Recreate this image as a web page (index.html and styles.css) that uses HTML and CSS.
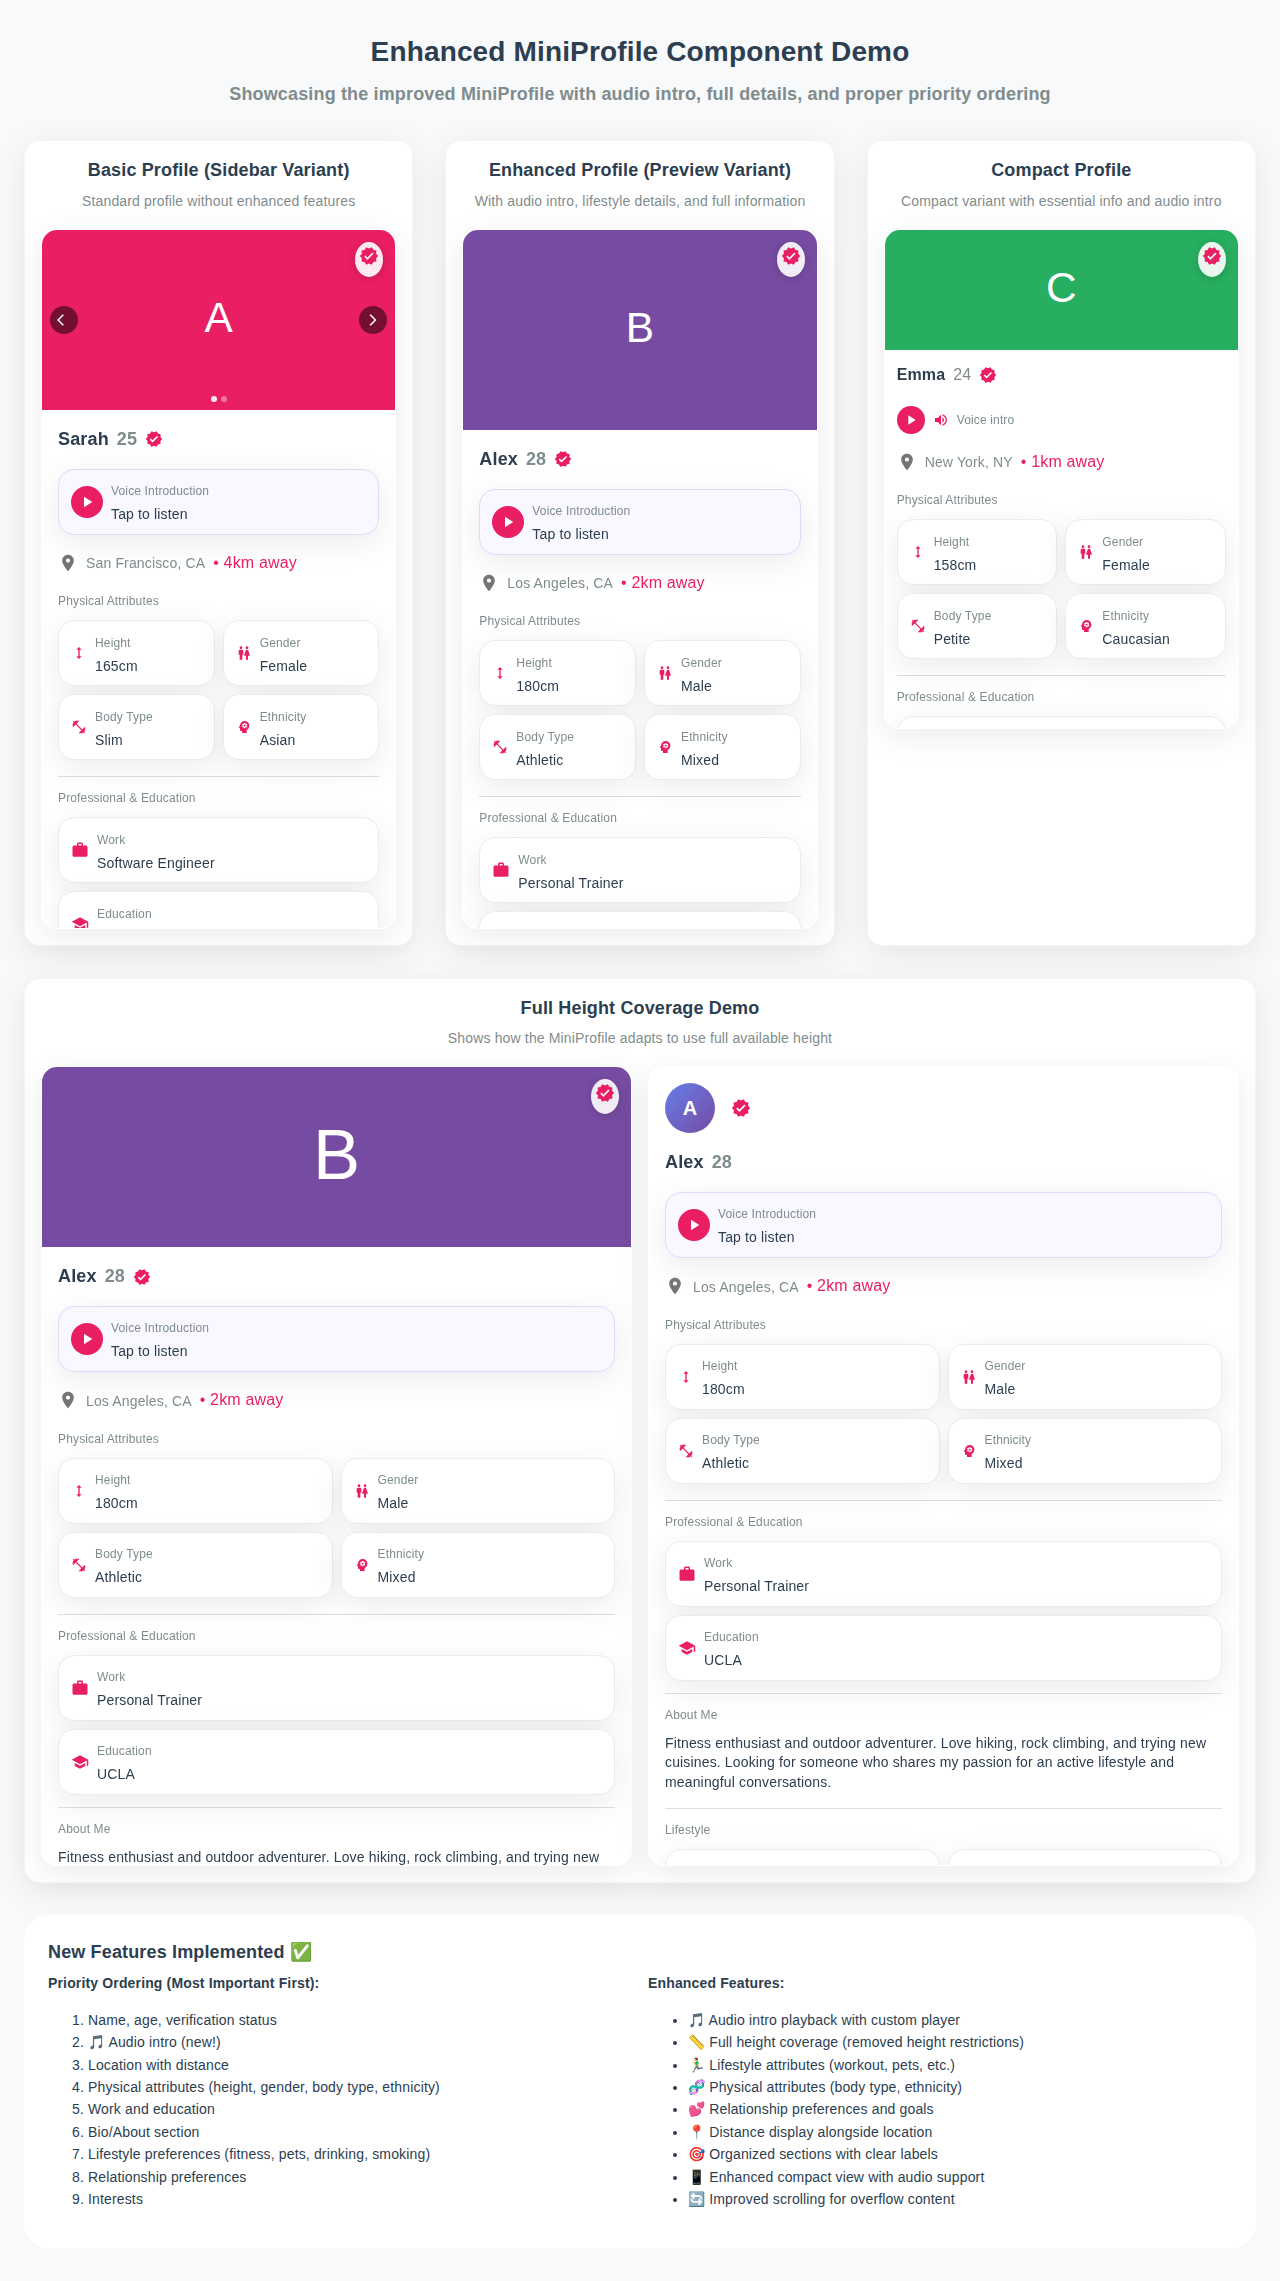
FILE: index.html
```html
<!DOCTYPE html>
<html lang="en">
<head>
<meta charset="utf-8">
<title>Enhanced MiniProfile Component Demo</title>
<link rel="stylesheet" href="styles.css">
</head>
<body>
<svg class="sprite" aria-hidden="true">
  <symbol id="i-verified" viewBox="0 0 24 24"><path d="m23 12-2.44-2.79.34-3.69-3.61-.82-1.89-3.2L12 2.96 8.6 1.5 6.71 4.69 3.1 5.5l.34 3.7L1 12l2.44 2.79-.34 3.7 3.61.82L8.6 22.5l3.4-1.47 3.4 1.46 1.89-3.19 3.61-.82-.34-3.69zm-12.91 4.72-3.8-3.81 1.48-1.48 2.32 2.33 5.85-5.87 1.48 1.48z"/></symbol>
  <symbol id="i-play" viewBox="0 0 24 24"><path d="M8 5v14l11-7z"/></symbol>
  <symbol id="i-volume" viewBox="0 0 24 24"><path d="M3 9v6h4l5 5V4L7 9zm13.5 3c0-1.77-1.02-3.29-2.5-4.03v8.05c1.48-.73 2.5-2.25 2.5-4.02M14 3.23v2.06c2.89.86 5 3.54 5 6.71s-2.11 5.85-5 6.71v2.06c4.01-.91 7-4.49 7-8.77s-2.99-7.86-7-8.77"/></symbol>
  <symbol id="i-pin" viewBox="0 0 24 24"><path d="M12 2C8.13 2 5 5.13 5 9c0 5.25 7 13 7 13s7-7.75 7-13c0-3.87-3.13-7-7-7m0 9.5c-1.38 0-2.5-1.12-2.5-2.5s1.12-2.5 2.5-2.5 2.5 1.12 2.5 2.5-1.12 2.5-2.5 2.5"/></symbol>
  <symbol id="i-height" viewBox="0 0 24 24"><path d="M13 6.99h3L12 3 8 6.99h3v10.02H8L12 21l4-3.99h-3z"/></symbol>
  <symbol id="i-gender" viewBox="0 0 24 24"><path d="M5.5 22v-7.5H4V9c0-1.1.9-2 2-2h3c1.1 0 2 .9 2 2v5.5H9.5V22zM18 22v-6h3l-2.54-7.63C18.18 7.55 17.42 7 16.56 7h-.12c-.86 0-1.63.55-1.9 1.37L12 16h3v6zM7.5 6c1.11 0 2-.89 2-2s-.89-2-2-2-2 .89-2 2 .89 2 2 2m9 0c1.11 0 2-.89 2-2s-.89-2-2-2-2 .89-2 2 .89 2 2 2"/></symbol>
  <symbol id="i-fitness" viewBox="0 0 24 24"><path d="M20.57 14.86 22 13.43 20.57 12 17 15.57 8.43 7 12 3.43 10.57 2 9.14 3.43 7.71 2 5.57 4.14 4.14 2.71 2.71 4.14l1.43 1.43L2 7.71l1.43 1.43L2 10.57 3.43 12 7 8.43 15.57 17 12 20.57 13.43 22l1.43-1.43L16.29 22l2.14-2.14 1.43 1.43 1.43-1.43-1.43-1.43L22 16.29z"/></symbol>
  <symbol id="i-mind" viewBox="0 0 24 24"><path d="M13 8.57c-.79 0-1.43.64-1.43 1.43s.64 1.43 1.43 1.43 1.43-.64 1.43-1.43-.64-1.43-1.43-1.43"/><path d="M13 3C9.25 3 6.2 5.94 6.02 9.64L4.1 12.2c-.25.33-.01.8.4.8H6v3c0 1.1.9 2 2 2h1v3h7v-4.68c2.36-1.12 4-3.53 4-6.32 0-3.87-3.13-7-7-7m3 7c0 .13-.01.26-.02.39l.83.66c.08.06.1.16.05.25l-.8 1.39c-.05.09-.16.12-.24.09l-.99-.4c-.21.16-.43.29-.67.39L14 13.83c-.01.1-.1.17-.2.17h-1.6c-.1 0-.18-.07-.2-.17l-.15-1.06c-.25-.1-.47-.23-.68-.39l-.99.4c-.09.03-.2 0-.25-.09l-.8-1.39c-.05-.08-.03-.19.05-.25l.84-.66c-.01-.13-.02-.26-.02-.39s.02-.27.04-.39l-.85-.66c-.08-.06-.1-.16-.05-.26l.8-1.38c.05-.09.15-.12.24-.09l1 .4c.2-.15.43-.29.67-.39L12 6.17c.02-.1.1-.17.2-.17h1.6c.1 0 .18.07.2.17l.15 1.06c.24.1.46.23.67.39l1-.4c.09-.03.2 0 .24.09l.8 1.38c.05.09.03.2-.05.26l-.85.66c.03.12.04.25.04.39"/></symbol>
  <symbol id="i-work" viewBox="0 0 24 24"><path d="M20 6h-4V4c0-1.11-.89-2-2-2h-4c-1.11 0-2 .89-2 2v2H4c-1.11 0-1.99.89-1.99 2L2 19c0 1.11.89 2 2 2h16c1.11 0 2-.89 2-2V8c0-1.11-.89-2-2-2m-6 0h-4V4h4z"/></symbol>
  <symbol id="i-school" viewBox="0 0 24 24"><path d="M5 13.18v4L12 21l7-3.82v-4L12 17zM12 3 1 9l11 6 9-4.91V17h2V9z"/></symbol>
  <symbol id="i-back" viewBox="0 0 24 24"><path d="M11.67 3.87 9.9 2.1 0 12l9.9 9.9 1.77-1.77L3.54 12z"/></symbol>
  <symbol id="i-forward" viewBox="0 0 24 24"><path d="M6.23 20.23 8 22l10-10L8 2 6.23 3.77 14.46 12z"/></symbol>
</svg>

<main class="page">
  <header class="page-header">
    <h1 class="page-title">Enhanced MiniProfile Component Demo</h1>
    <h2 class="page-subtitle">Showcasing the improved MiniProfile with audio intro, full details, and proper priority ordering</h2>
  </header>

  <div class="demo-row">
    <section class="card">
      <h3 class="card-title">Basic Profile (Sidebar Variant)</h3>
      <p class="card-subtitle">Standard profile without enhanced features</p>
      <article class="mini mini-tall">
        <div class="photo photo-pink photo-180">
          <span class="photo-letter">A</span>
          <span class="photo-badge"><svg class="icon icon-20"><use href="#i-verified"/></svg></span>
          <span class="photo-nav photo-nav-prev"><svg class="icon icon-14"><use href="#i-back"/></svg></span>
          <span class="photo-nav photo-nav-next"><svg class="icon icon-14"><use href="#i-forward"/></svg></span>
          <span class="photo-dots"><span class="dot dot-active"></span><span class="dot"></span></span>
        </div>
        <div class="mini-body">
          <div class="name-row"><span class="name">Sarah</span><span class="age">25</span><svg class="icon icon-18"><use href="#i-verified"/></svg></div>
          <div class="voice">
            <span class="play"><svg class="icon icon-18"><use href="#i-play"/></svg></span>
            <div class="voice-text"><span class="label">Voice Introduction</span><span class="value">Tap to listen</span></div>
          </div>
          <div class="location"><svg class="icon icon-20 icon-muted"><use href="#i-pin"/></svg><span class="city">San Francisco, CA</span><span class="distance">• 4km away</span></div>
          <h4 class="section-label">Physical Attributes</h4>
          <div class="tiles tiles-two">
            <div class="tile"><svg class="icon icon-16"><use href="#i-height"/></svg><div class="tile-text"><span class="label">Height</span><span class="value">165cm</span></div></div>
            <div class="tile"><svg class="icon icon-16"><use href="#i-gender"/></svg><div class="tile-text"><span class="label">Gender</span><span class="value">Female</span></div></div>
            <div class="tile"><svg class="icon icon-16"><use href="#i-fitness"/></svg><div class="tile-text"><span class="label">Body Type</span><span class="value">Slim</span></div></div>
            <div class="tile"><svg class="icon icon-16"><use href="#i-mind"/></svg><div class="tile-text"><span class="label">Ethnicity</span><span class="value">Asian</span></div></div>
          </div>
          <hr class="divider divider-wide">
          <h4 class="section-label">Professional &amp; Education</h4>
          <div class="tiles">
            <div class="tile"><svg class="icon icon-18"><use href="#i-work"/></svg><div class="tile-text"><span class="label">Work</span><span class="value">Software Engineer</span></div></div>
            <div class="tile"><svg class="icon icon-18"><use href="#i-school"/></svg><div class="tile-text"><span class="label">Education</span><span class="value">&nbsp;</span></div></div>
          </div>
        </div>
      </article>
    </section>

    <section class="card">
      <h3 class="card-title">Enhanced Profile (Preview Variant)</h3>
      <p class="card-subtitle">With audio intro, lifestyle details, and full information</p>
      <article class="mini mini-tall">
        <div class="photo photo-purple photo-200">
          <span class="photo-letter">B</span>
          <span class="photo-badge"><svg class="icon icon-20"><use href="#i-verified"/></svg></span>
        </div>
        <div class="mini-body">
          <div class="name-row"><span class="name">Alex</span><span class="age">28</span><svg class="icon icon-18"><use href="#i-verified"/></svg></div>
          <div class="voice">
            <span class="play"><svg class="icon icon-18"><use href="#i-play"/></svg></span>
            <div class="voice-text"><span class="label">Voice Introduction</span><span class="value">Tap to listen</span></div>
          </div>
          <div class="location"><svg class="icon icon-20 icon-muted"><use href="#i-pin"/></svg><span class="city">Los Angeles, CA</span><span class="distance">• 2km away</span></div>
          <h4 class="section-label">Physical Attributes</h4>
          <div class="tiles tiles-two">
            <div class="tile"><svg class="icon icon-16"><use href="#i-height"/></svg><div class="tile-text"><span class="label">Height</span><span class="value">180cm</span></div></div>
            <div class="tile"><svg class="icon icon-16"><use href="#i-gender"/></svg><div class="tile-text"><span class="label">Gender</span><span class="value">Male</span></div></div>
            <div class="tile"><svg class="icon icon-16"><use href="#i-fitness"/></svg><div class="tile-text"><span class="label">Body Type</span><span class="value">Athletic</span></div></div>
            <div class="tile"><svg class="icon icon-16"><use href="#i-mind"/></svg><div class="tile-text"><span class="label">Ethnicity</span><span class="value">Mixed</span></div></div>
          </div>
          <hr class="divider divider-wide">
          <h4 class="section-label">Professional &amp; Education</h4>
          <div class="tiles">
            <div class="tile"><svg class="icon icon-18"><use href="#i-work"/></svg><div class="tile-text"><span class="label">Work</span><span class="value">Personal Trainer</span></div></div>
            <div class="tile"></div>
          </div>
        </div>
      </article>
    </section>

    <section class="card">
      <h3 class="card-title">Compact Profile</h3>
      <p class="card-subtitle">Compact variant with essential info and audio intro</p>
      <article class="mini mini-compact">
        <div class="photo photo-green photo-120">
          <span class="photo-letter">C</span>
          <span class="photo-badge"><svg class="icon icon-20"><use href="#i-verified"/></svg></span>
        </div>
        <div class="mini-body">
          <div class="name-row"><span class="name">Emma</span><span class="age">24</span><svg class="icon icon-18"><use href="#i-verified"/></svg></div>
          <div class="voice-compact">
            <span class="play play-small"><svg class="icon icon-16"><use href="#i-play"/></svg></span>
            <svg class="icon icon-16"><use href="#i-volume"/></svg>
            <span class="voice-note">Voice intro</span>
          </div>
          <div class="location"><svg class="icon icon-20 icon-muted"><use href="#i-pin"/></svg><span class="city">New York, NY</span><span class="distance">• 1km away</span></div>
          <h4 class="section-label">Physical Attributes</h4>
          <div class="tiles tiles-two">
            <div class="tile"><svg class="icon icon-16"><use href="#i-height"/></svg><div class="tile-text"><span class="label">Height</span><span class="value">158cm</span></div></div>
            <div class="tile"><svg class="icon icon-16"><use href="#i-gender"/></svg><div class="tile-text"><span class="label">Gender</span><span class="value">Female</span></div></div>
            <div class="tile"><svg class="icon icon-16"><use href="#i-fitness"/></svg><div class="tile-text"><span class="label">Body Type</span><span class="value">Petite</span></div></div>
            <div class="tile"><svg class="icon icon-16"><use href="#i-mind"/></svg><div class="tile-text"><span class="label">Ethnicity</span><span class="value">Caucasian</span></div></div>
          </div>
          <hr class="divider divider-wide">
          <h4 class="section-label">Professional &amp; Education</h4>
          <div class="tiles">
            <div class="tile"></div>
          </div>
        </div>
      </article>
    </section>
  </div>

  <section class="card card-full">
    <h3 class="card-title">Full Height Coverage Demo</h3>
    <p class="card-subtitle">Shows how the MiniProfile adapts to use full available height</p>
    <div class="mini-row">
      <article class="mini mini-full">
        <div class="photo photo-purple photo-180 photo-large">
          <span class="photo-letter">B</span>
          <span class="photo-badge"><svg class="icon icon-20"><use href="#i-verified"/></svg></span>
        </div>
        <div class="mini-body">
          <div class="name-row"><span class="name">Alex</span><span class="age">28</span><svg class="icon icon-18"><use href="#i-verified"/></svg></div>
          <div class="voice">
            <span class="play"><svg class="icon icon-18"><use href="#i-play"/></svg></span>
            <div class="voice-text"><span class="label">Voice Introduction</span><span class="value">Tap to listen</span></div>
          </div>
          <div class="location"><svg class="icon icon-20 icon-muted"><use href="#i-pin"/></svg><span class="city">Los Angeles, CA</span><span class="distance">• 2km away</span></div>
          <h4 class="section-label">Physical Attributes</h4>
          <div class="tiles tiles-two">
            <div class="tile"><svg class="icon icon-16"><use href="#i-height"/></svg><div class="tile-text"><span class="label">Height</span><span class="value">180cm</span></div></div>
            <div class="tile"><svg class="icon icon-16"><use href="#i-gender"/></svg><div class="tile-text"><span class="label">Gender</span><span class="value">Male</span></div></div>
            <div class="tile"><svg class="icon icon-16"><use href="#i-fitness"/></svg><div class="tile-text"><span class="label">Body Type</span><span class="value">Athletic</span></div></div>
            <div class="tile"><svg class="icon icon-16"><use href="#i-mind"/></svg><div class="tile-text"><span class="label">Ethnicity</span><span class="value">Mixed</span></div></div>
          </div>
          <hr class="divider divider-wide">
          <h4 class="section-label">Professional &amp; Education</h4>
          <div class="tiles">
            <div class="tile"><svg class="icon icon-18"><use href="#i-work"/></svg><div class="tile-text"><span class="label">Work</span><span class="value">Personal Trainer</span></div></div>
            <div class="tile"><svg class="icon icon-18"><use href="#i-school"/></svg><div class="tile-text"><span class="label">Education</span><span class="value">UCLA</span></div></div>
          </div>
          <hr class="divider">
          <h4 class="section-label">About Me</h4>
          <p class="bio">Fitness enthusiast and outdoor adventurer. Love hiking, rock climbing, and trying new</p>
        </div>
      </article>

      <article class="mini mini-full">
        <div class="mini-body">
          <div class="avatar-row"><span class="avatar">A</span><svg class="icon icon-20"><use href="#i-verified"/></svg></div>
          <div class="name-row"><span class="name">Alex</span><span class="age">28</span></div>
          <div class="voice">
            <span class="play"><svg class="icon icon-18"><use href="#i-play"/></svg></span>
            <div class="voice-text"><span class="label">Voice Introduction</span><span class="value">Tap to listen</span></div>
          </div>
          <div class="location"><svg class="icon icon-20 icon-muted"><use href="#i-pin"/></svg><span class="city">Los Angeles, CA</span><span class="distance">• 2km away</span></div>
          <h4 class="section-label">Physical Attributes</h4>
          <div class="tiles tiles-two">
            <div class="tile"><svg class="icon icon-16"><use href="#i-height"/></svg><div class="tile-text"><span class="label">Height</span><span class="value">180cm</span></div></div>
            <div class="tile"><svg class="icon icon-16"><use href="#i-gender"/></svg><div class="tile-text"><span class="label">Gender</span><span class="value">Male</span></div></div>
            <div class="tile"><svg class="icon icon-16"><use href="#i-fitness"/></svg><div class="tile-text"><span class="label">Body Type</span><span class="value">Athletic</span></div></div>
            <div class="tile"><svg class="icon icon-16"><use href="#i-mind"/></svg><div class="tile-text"><span class="label">Ethnicity</span><span class="value">Mixed</span></div></div>
          </div>
          <hr class="divider divider-wide">
          <h4 class="section-label">Professional &amp; Education</h4>
          <div class="tiles">
            <div class="tile"><svg class="icon icon-18"><use href="#i-work"/></svg><div class="tile-text"><span class="label">Work</span><span class="value">Personal Trainer</span></div></div>
            <div class="tile"><svg class="icon icon-18"><use href="#i-school"/></svg><div class="tile-text"><span class="label">Education</span><span class="value">UCLA</span></div></div>
          </div>
          <hr class="divider">
          <h4 class="section-label">About Me</h4>
          <p class="bio">Fitness enthusiast and outdoor adventurer. Love hiking, rock climbing, and trying new cuisines. Looking for someone who shares my passion for an active lifestyle and meaningful conversations.</p>
          <hr class="divider divider-bio">
          <h4 class="section-label">Lifestyle</h4>
          <div class="tiles tiles-two">
            <div class="tile"></div>
            <div class="tile"></div>
          </div>
        </div>
      </article>
    </div>
  </section>

  <section class="features">
    <h3 class="features-title">New Features Implemented ✅</h3>
    <div class="features-columns">
      <div>
        <h4 class="features-heading">Priority Ordering (Most Important First):</h4>
        <ol class="features-list">
          <li>Name, age, verification status</li>
          <li>🎵 Audio intro (new!)</li>
          <li>Location with distance</li>
          <li>Physical attributes (height, gender, body type, ethnicity)</li>
          <li>Work and education</li>
          <li>Bio/About section</li>
          <li>Lifestyle preferences (fitness, pets, drinking, smoking)</li>
          <li>Relationship preferences</li>
          <li>Interests</li>
        </ol>
      </div>
      <div>
        <h4 class="features-heading">Enhanced Features:</h4>
        <ul class="features-list">
          <li>🎵 Audio intro playback with custom player</li>
          <li>📏 Full height coverage (removed height restrictions)</li>
          <li>🏃‍♂️ Lifestyle attributes (workout, pets, etc.)</li>
          <li>🧬 Physical attributes (body type, ethnicity)</li>
          <li>💕 Relationship preferences and goals</li>
          <li>📍 Distance display alongside location</li>
          <li>🎯 Organized sections with clear labels</li>
          <li>📱 Enhanced compact view with audio support</li>
          <li>🔄 Improved scrolling for overflow content</li>
        </ul>
      </div>
    </div>
  </section>
</main>
</body>
</html>
```
FILE: styles.css
```css
:root {
  --ink: #2c3e50;
  --muted: #7f8c8d;
  --accent: #e91e63;
  --soft-shadow: 0 8px 32px rgba(0, 0, 0, 0.08);
}

* { box-sizing: border-box; }

body {
  margin: 0;
  background: #f8f9fb;
  color: var(--ink);
  font-family: "Liberation Sans", Arial, sans-serif;
  font-size: 14px;
  letter-spacing: 0.15px;
}

h1, h2, h3, h4, p { margin: 0; }

.sprite { display: none; }

.page { padding: 32px 24px; }

/* Header */
.page-header { text-align: center; margin-bottom: 33.2px; }
.page-title {
  font-size: 28px;
  line-height: 39.2px;
  margin-bottom: 10.8px;
}
.page-subtitle {
  font-size: 18px;
  line-height: 25.2px;
  color: var(--muted);
}

/* Demo cards */
.demo-row {
  display: grid;
  grid-template-columns: repeat(3, minmax(0, 1fr));
  gap: 32px;
  margin-bottom: 32px;
}
.card {
  padding: 16px;
  background: #fff;
  border: 1px solid rgba(0, 0, 0, 0.04);
  border-radius: 16px;
  box-shadow: var(--soft-shadow);
}
.card-full { margin-bottom: 32px; }
.card-title {
  font-size: 18px;
  line-height: 26.6px;
  margin-bottom: 7px;
  text-align: center;
}
.card-subtitle {
  line-height: 21.8px;
  margin-bottom: 16px;
  color: var(--muted);
  text-align: center;
}
.mini-row {
  display: grid;
  grid-template-columns: repeat(2, minmax(0, 1fr));
  gap: 16px;
}

/* Mini profile */
.mini {
  overflow: hidden;
  background: rgba(255, 255, 255, 0.95);
  border: 1px solid #fff;
  border-radius: 16px;
  box-shadow: var(--soft-shadow);
  backdrop-filter: blur(10px);
}
.mini-tall { height: 700px; }
.mini-compact { height: 500px; }
.mini-full { height: 800px; }
.mini-body { padding: 16px; }
.mini-compact .mini-body { padding: 12px; }

.icon { flex: none; display: block; fill: currentColor; color: var(--accent); }
.icon-14 { width: 14px; height: 14px; }
.icon-16 { width: 16px; height: 16px; }
.icon-18 { width: 18px; height: 18px; }
.icon-20 { width: 20px; height: 20px; }
.icon-muted { color: #757575; }

/* Photo header */
.photo {
  position: relative;
  display: flex;
  align-items: center;
  justify-content: center;
  padding-bottom: 3px;
  color: #fff;
}
.photo-120 { height: 120px; }
.photo-180 { height: 180px; }
.photo-200 { height: 200px; }
.photo-pink { background: #e91e63; }
.photo-purple { background: #764ba2; }
.photo-green { background: #27ae60; }
.photo-letter { font-size: 42.4px; line-height: 1; letter-spacing: 0; }
.photo-large .photo-letter { font-size: 70.7px; }
.photo-badge {
  position: absolute;
  top: 12px;
  right: 12px;
  width: 28px;
  height: 35px;
  padding: 4px;
  border-radius: 50%;
  background: rgba(255, 255, 255, 0.9);
  box-shadow: 0 2px 8px rgba(0, 0, 0, 0.15);
}
.photo-nav {
  position: absolute;
  top: calc(50% - 14px);
  display: flex;
  align-items: center;
  justify-content: center;
  width: 28px;
  height: 28px;
  border-radius: 50%;
  background: rgba(0, 0, 0, 0.5);
}
.photo-nav-prev { left: 8px; }
.photo-nav-next { right: 8px; }
.photo-nav .icon { color: #fff; }
.photo-dots {
  position: absolute;
  bottom: 8px;
  left: calc(50% - 8px);
  display: flex;
  gap: 4px;
}
.dot { width: 6px; height: 6px; border-radius: 50%; background: rgba(255, 255, 255, 0.4); }
.dot-active { background: rgba(255, 255, 255, 0.9); }

/* Identity */
.avatar-row { display: flex; align-items: center; gap: 16px; margin-bottom: 16px; }
.avatar {
  display: flex;
  align-items: center;
  justify-content: center;
  width: 50px;
  height: 50px;
  border-radius: 50%;
  background: linear-gradient(135deg, #667eea 0%, #764ba2 100%);
  color: #fff;
  font-size: 20px;
  font-weight: 700;
}
.name-row {
  display: flex;
  align-items: center;
  gap: 8px;
  height: 27px;
  margin-bottom: 16px;
  font-size: 18px;
  font-weight: 700;
}
.age { color: var(--muted); }
.mini-compact .name-row { font-size: 16px; margin-bottom: 17px; }
.mini-compact .age { font-weight: 400; }

/* Voice introduction */
.voice {
  display: flex;
  align-items: center;
  gap: 8px;
  height: 66px;
  padding: 0 12px;
  margin-bottom: 16px;
  background: #f9f7ff;
  border: 1px solid #e0d9fb;
  border-radius: 16px;
  box-shadow: var(--soft-shadow);
}
.voice-compact { display: flex; align-items: center; gap: 8px; margin-bottom: 16px; }
.voice-note { font-size: 12px; color: var(--muted); }
.play {
  flex: none;
  display: flex;
  align-items: center;
  justify-content: center;
  width: 32px;
  height: 32px;
  border-radius: 50%;
  background: var(--accent);
}
.play-small { width: 28px; height: 28px; }
.play .icon { color: #fff; }

.label, .value { display: block; }
.label { font-size: 12px; line-height: 24px; color: var(--muted); }
.value { font-size: 14px; line-height: 22px; }
.voice-text { padding-top: 1.4px; }
.voice-text .label { line-height: 23px; }
.tile-text { padding-top: 1.4px; }

/* Location */
.location {
  display: flex;
  align-items: center;
  gap: 8px;
  height: 24px;
  margin-bottom: 16.4px;
}
.city { color: var(--muted); padding-top: 1px; }
.distance { font-size: 16px; color: var(--accent); }

/* Detail sections */
.section-label {
  font-size: 12px;
  font-weight: 400;
  line-height: 21px;
  margin-bottom: 8px;
  color: var(--muted);
}
.tiles { display: grid; grid-template-columns: minmax(0, 1fr); gap: 8px; }
.tiles-two { grid-template-columns: repeat(2, minmax(0, 1fr)); }
.tile {
  display: flex;
  align-items: center;
  gap: 8px;
  height: 66px;
  padding: 0 12px;
  background: #fff;
  border: 1px solid #ebebeb;
  border-radius: 16px;
  box-shadow: var(--soft-shadow);
}
.divider {
  height: 1px;
  margin: 12px 0 11px;
  border: 0;
  background: #dfdfdf;
}
.divider-wide { margin-top: 16px; }
.divider-bio { margin-top: 15.6px; }
.bio { line-height: 19.6px; }

/* Feature summary */
.features { padding: 24px; background: #fff; border-radius: 24px; }
.features-title {
  font-size: 18px;
  line-height: 26.6px;
  margin-bottom: 6.6px;
}
.features-columns {
  display: grid;
  grid-template-columns: repeat(2, minmax(0, 1fr));
  gap: 16px;
}
.features-heading { font-size: 14px; line-height: 23.4px; }
.features-list { margin: 13px 0 14px; padding-left: 40px; line-height: 22.4px; }
```
